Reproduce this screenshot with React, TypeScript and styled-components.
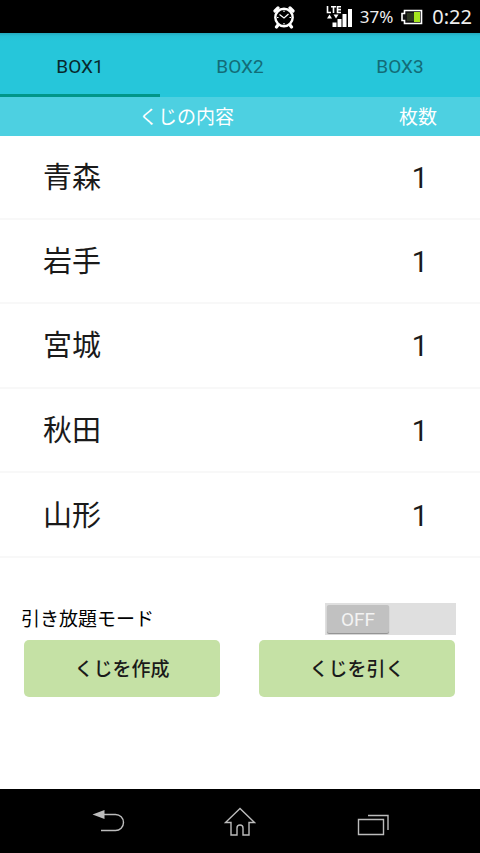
import React, { useState } from "react";
import styled, { createGlobalStyle } from "styled-components";

const GlobalStyle = createGlobalStyle`
  *, *::before, *::after { box-sizing: border-box; }
  body {
    margin: 0;
    background: #fff;
    font-family: Roboto, "Noto Sans CJK JP", sans-serif;
    color: #1a1a1a;
  }
  button { font: inherit; color: inherit; border: 0; padding: 0; cursor: pointer; }
`;

const Screen = styled.div`
  display: flex;
  flex-direction: column;
  min-height: 100vh;
`;

const StatusBar = styled.header`
  display: flex;
  align-items: center;
  justify-content: flex-end;
  height: 33px;
  padding-right: 8px;
  background: #000;
  color: #eee;
  svg { display: block; flex: none; }
`;

const AlarmSlot = styled.span`
  margin-right: 30px;
`;

const BatteryText = styled.span`
  margin: 0 8px 0 6px;
  font-family: "Noto Sans", sans-serif;
  font-size: 17px;
  line-height: 24px;
`;

const Clock = styled.time`
  margin-left: 9px;
  font-family: "Noto Sans", sans-serif;
  font-size: 20px;
  line-height: 24px;
`;

const Tabs = styled.nav`
  display: grid;
  grid-template-columns: repeat(3, 1fr);
  height: 64px;
  background: linear-gradient(#24a9bd, #26c0d5 3px, #26c6da 8px);
`;

const Tab = styled.button<{ $active: boolean }>`
  && { padding-top: 6px; }
  background: none;
  && { border-bottom: 3px solid ${(p) => (p.$active ? "#009688" : "transparent")}; }
  && { color: ${(p) => (p.$active ? "#08282c" : "#136c77")}; }
  font-size: 19px;
  line-height: 24px;
`;

const Lots = styled.table`
  width: 100%;
  height: 461px;
  border-collapse: collapse;
  table-layout: fixed;
`;

const HeadCell = styled.th<{ $count?: boolean }>`
  width: ${(p) => (p.$count ? "25%" : "75%")};
  height: 39px;
  padding: ${(p) => (p.$count ? "2px 4px 0 0" : "2px 0 0 13px")};
  background: #4dd0e1;
  color: #fff;
  font-size: 19px;
  font-weight: 400;
  line-height: 24px;
  text-align: center;
`;

const Cell = styled.td<{ $count?: boolean }>`
  padding: ${(p) => (p.$count ? "2px 0 0" : "2px 0 0 43px")};
  border-bottom: 2px solid #f8f8f8;
  font-size: 29px;
  line-height: 36px;
  text-align: ${(p) => (p.$count ? "center" : "left")};
`;

const Controls = styled.section`
  flex: 1;
  padding: 44px 25px 0 24px;
`;

const ModeRow = styled.div`
  display: flex;
  align-items: center;
  justify-content: space-between;
  height: 33px;
  margin: 0 -1px 5px -3px;
`;

const ModeLabel = styled.label`
  padding-top: 2px;
  font-size: 19px;
  line-height: 24px;
  color: #000;
`;

const Switch = styled.span<{ $on: boolean }>`
  position: relative;
  display: flex;
  justify-content: ${(p) => (p.$on ? "flex-end" : "flex-start")};
  width: 131px;
  height: 32px;
  padding: 2px;
  background: #dfdfdf;
`;

const SwitchInput = styled.input`
  position: absolute;
  inset: 0;
  width: 100%;
  height: 100%;
  margin: 0;
  opacity: 0;
  cursor: pointer;
`;

const Thumb = styled.span`
  width: 62px;
  height: 28px;
  border-radius: 2px;
  background: #c1c1c1;
  box-shadow: 0 1px 1px #8c8c8c;
  color: #f3f3f3;
  font-size: 19px;
  line-height: 30px;
  text-align: center;
`;

const Actions = styled.div`
  display: grid;
  grid-template-columns: 1fr 1fr;
  gap: 39px;
`;

const ActionButton = styled.button`
  && {
    padding-top: 3px;
    font-weight: 500;
  }
  height: 57px;
  border-radius: 5px;
  background: #c5e1a5;
  font-size: 19px;
  line-height: 24px;
`;

const SystemNav = styled.nav`
  display: grid;
  grid-template-columns: repeat(3, 133px);
  justify-content: center;
  height: 64px;
  background: #000;
`;

const NavButton = styled.button`
  && { padding-top: 4px; }
  display: flex;
  align-items: center;
  justify-content: center;
  background: none;
  svg { width: 40px; height: 36px; fill: none; stroke: #bcbcbc; stroke-width: 1.4; }
`;

const AlarmIcon = () => (
  <svg width="24" height="24" viewBox="0 0 24 24" fill="none" stroke="#fff">
    <path d="M3 6 6 3M21 6 18 3M6 20 4.500 22M18 20 19.500 22" strokeWidth="3.200" strokeLinecap="round" />
    <circle cx="12" cy="12.500" r="8.700" fill="#000" strokeWidth="2.400" />
    <path d="M12 5.500v1.500M12 18v1.500M5 12.500h1.500M17.500 12.500H19M7.500 9.500l4.500 3.500 4.500-4" strokeWidth="1.200" />
  </svg>
);

const SignalIcon = () => (
  <svg width="28" height="23" viewBox="0 0 28 23" fill="#fff">
    <path d="M1.500 1v6.500H5M5 1.800h5M7.500 1v7M15 1.800h-3.500v5.700H15M11.500 4.600H15" fill="none" stroke="#fff" strokeWidth="1.600" />
    <path d="M1 13.500h5L3.500 9.500zM7.500 9.500h5L10 13.500zM6.500 17.500h4V22h-4zM11.500 14h4v8h-4zM16.500 9h4v13h-4zM22 4h4v18h-4z" />
  </svg>
);

const BatteryIcon = () => (
  <svg width="22" height="16" viewBox="0 0 22 16">
    <path d="M3.500 1.500h17v13h-17v-3H1v-7h2.500z" fill="#111" stroke="#fff" strokeWidth="1.600" />
    <path d="M6 4h7v8H6z" fill="#2c3520" />
    <path d="M13 3h6v10h-6z" fill="#a4e51d" />
  </svg>
);

const prefectures = ["青森", "岩手", "宮城", "秋田", "山形"];

export default function App() {
  const [tab, setTab] = useState("BOX1");
  const [unlimited, setUnlimited] = useState(false);
  return (
    <Screen>
      <GlobalStyle />
      <StatusBar>
        <AlarmSlot><AlarmIcon /></AlarmSlot>
        <SignalIcon />
        <BatteryText>37%</BatteryText>
        <BatteryIcon />
        <Clock>0:22</Clock>
      </StatusBar>
      <Tabs>
        {["BOX1", "BOX2", "BOX3"].map((name) => (
          <Tab key={name} $active={name === tab} onClick={() => setTab(name)}>{name}</Tab>
        ))}
      </Tabs>
      <Lots>
        <thead>
          <tr>
            <HeadCell>くじの内容</HeadCell>
            <HeadCell $count>枚数</HeadCell>
          </tr>
        </thead>
        <tbody>
          {prefectures.map((name) => (
            <tr key={name}>
              <Cell>{name}</Cell>
              <Cell $count>1</Cell>
            </tr>
          ))}
        </tbody>
      </Lots>
      <Controls>
        <ModeRow>
          <ModeLabel htmlFor="unlimited">引き放題モード</ModeLabel>
          <Switch $on={unlimited}>
            <Thumb>{unlimited ? "ON" : "OFF"}</Thumb>
            <SwitchInput
              id="unlimited"
              type="checkbox"
              role="switch"
              checked={unlimited}
              onChange={(e) => setUnlimited(e.target.checked)}
            />
          </Switch>
        </ModeRow>
        <Actions>
          <ActionButton>くじを作成</ActionButton>
          <ActionButton>くじを引く</ActionButton>
        </Actions>
      </Controls>
      <SystemNav>
        <NavButton aria-label="戻る">
          <svg viewBox="0 0 40 36">
            <path d="M16 9.500h12.500a8 8 0 0 1 0 16H14" />
            <path d="M5.500 9.500 17.500 5v9z" fill="#bcbcbc" stroke="none" />
          </svg>
        </NavButton>
        <NavButton aria-label="ホーム">
          <svg viewBox="0 0 40 36">
            <path d="M20 3.500 5.500 17.500h5.500v12.500h6v-7a3 3 0 0 1 6 0v7h6v-12.500h5.500z" />
          </svg>
        </NavButton>
        <NavButton aria-label="最近使ったアプリ">
          <svg viewBox="0 0 40 36">
            <path d="M5.500 14.500h25v15h-25zM15 10.500h20v14.500" />
          </svg>
        </NavButton>
      </SystemNav>
    </Screen>
  );
}
